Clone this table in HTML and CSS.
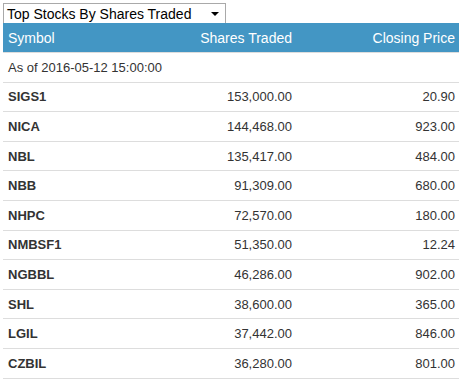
FILE: index.html
```html
<!DOCTYPE html>
<html>
<head>
<meta charset="utf-8">
<link rel="stylesheet" href="styles.css">
</head>
<body>
<div class="picker">
  <span class="picker-label">Top Stocks By Shares Traded</span>
  <span class="picker-arrow"></span>
</div>
<table class="stocks">
  <colgroup><col class="c1"><col class="c2"><col class="c3"></colgroup>
  <thead>
    <tr><th class="left">Symbol</th><th>Shares Traded</th><th>Closing Price</th></tr>
  </thead>
  <tbody>
    <tr><td colspan="3" class="asof">As of 2016-05-12 15:00:00</td></tr>
    <tr><td class="sym">SIGS1</td><td>153,000.00</td><td>20.90</td></tr>
    <tr><td class="sym">NICA</td><td>144,468.00</td><td>923.00</td></tr>
    <tr><td class="sym">NBL</td><td>135,417.00</td><td>484.00</td></tr>
    <tr><td class="sym">NBB</td><td>91,309.00</td><td>680.00</td></tr>
    <tr><td class="sym">NHPC</td><td>72,570.00</td><td>180.00</td></tr>
    <tr><td class="sym">NMBSF1</td><td>51,350.00</td><td>12.24</td></tr>
    <tr><td class="sym">NGBBL</td><td>46,286.00</td><td>902.00</td></tr>
    <tr><td class="sym">SHL</td><td>38,600.00</td><td>365.00</td></tr>
    <tr><td class="sym">LGIL</td><td>37,442.00</td><td>846.00</td></tr>
    <tr><td class="sym">CZBIL</td><td>36,280.00</td><td>801.00</td></tr>
  </tbody>
</table>
</body>
</html>
```
FILE: styles.css
```css
html, body { margin: 0; padding: 0; background: #fff; }
body {
  padding: 3px;
  font-family: "Liberation Sans", Arial, sans-serif;
  font-size: 13px;
  color: #333;
}
.picker {
  box-sizing: border-box;
  width: 223px;
  height: 20px;
  border: 1px solid #a9a9a9;
  border-bottom: none;
  display: flex;
  align-items: center;
  justify-content: space-between;
  padding: 0 6px 0 3px;
  color: #000;
  font-size: 14px;
}
.picker-arrow {
  width: 0; height: 0;
  border-left: 4px solid transparent;
  border-right: 4px solid transparent;
  border-top: 4px solid #000;
}
.stocks {
  width: 456px;
  border-collapse: collapse;
  table-layout: fixed;
}
.c1 { width: 150px; }
.c2 { width: 143px; }
.c3 { width: 163px; }
.stocks th {
  background: #4396c4;
  color: #fff;
  font-weight: normal;
  font-size: 14px;
  text-align: right;
  height: 29px;
  padding: 0 4px 0 5px;
  border-bottom: 1px solid #ddd;
  vertical-align: middle;
}
.stocks th.left { text-align: left; }
.stocks td {
  height: 28.6px;
  padding: 0 4px 0 5px;
  border-bottom: 1px solid #ddd;
  text-align: right;
  vertical-align: middle;
  font-size: 13px;
}
.stocks td.asof { text-align: left; }
.stocks td.sym { text-align: left; font-weight: bold; }
```
